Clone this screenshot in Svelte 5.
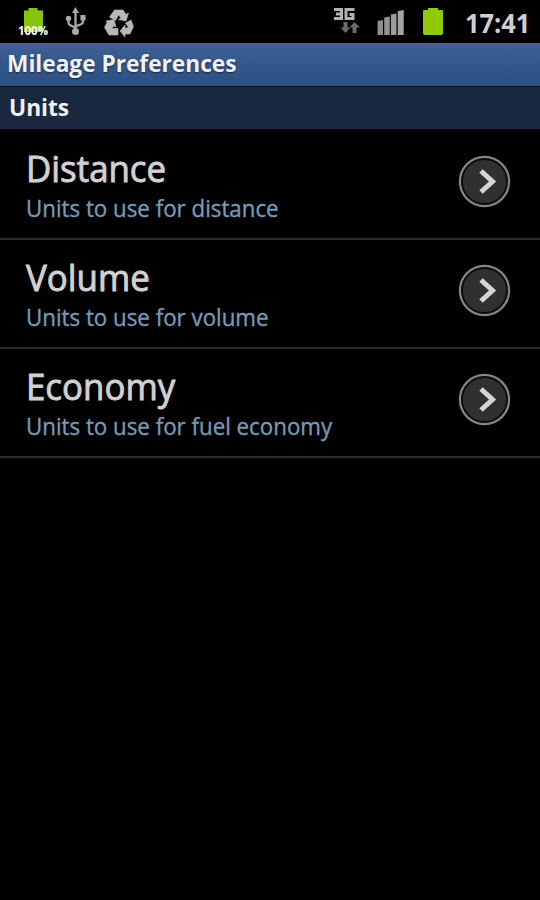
<script>
  let time = '17:41';

  let preferences = [
    { title: 'Distance', summary: 'Units to use for distance' },
    { title: 'Volume', summary: 'Units to use for volume' },
    { title: 'Economy', summary: 'Units to use for fuel economy' }
  ];
</script>

<div class="screen">
  <header class="status-bar">
    <div class="notifications">
      <svg class="battery-level" width="34" height="36" viewBox="0 0 34 36">
        <path d="M7 5.500h4.500V3h9v2.500H26V27H7z" fill="#86c40c" />
        <text x="1" y="30" textLength="30" lengthAdjust="spacingAndGlyphs">100%</text>
      </svg>
      <svg class="usb" width="22" height="30" viewBox="0 0 22 30">
        <g fill="none" stroke="#a8a8a8" stroke-width="2.300">
          <path d="M10.500 5v20M3.500 12v3.500q0 2 2 2.800l5 2.700M18 11v3.500q0 2-2 2.800l-5.500 2" />
        </g>
        <g fill="#a8a8a8">
          <path d="M10.500 0l3.500 6H7z" />
          <circle cx="3.500" cy="11.500" r="2.700" />
          <path d="M15.500 8h5v5.500h-5z" />
          <circle cx="10.500" cy="24.500" r="3.500" />
        </g>
      </svg>
      <svg class="recycle" width="30" height="30" viewBox="0 0 30 30">
        <g fill="#b8b8b8" stroke="#b8b8b8" stroke-width=".6">
          <path d="M10.500 1h8.500l3 4.500 2.500-1.500-2.500 8-7.500-1.500 2.500-1.500-2.500-3-3 5.500L5.500 8z" />
          <path d="M21.500 14l5.500-3 2.500 6.500-3.500 7.500H21v3l-5-6 5-6v3h2.500l.5-1.500z" />
          <path d="M2 12l8-1.500 2 7.500-2.500-1L8 19.500h6v6.500H5L.5 18.500l2.500-5z" />
        </g>
      </svg>
    </div>
    <div class="indicators">
      <svg class="network" width="29" height="28" viewBox="0 0 29 28">
        <g fill="none" stroke="#b2b2b2" stroke-width="3">
          <path d="M1 2.500h7.500v9H1M3 7h5.500M21.500 2.500H13v9h7V7.500h-3.500" />
        </g>
        <g fill="#6c6c6c">
          <path d="M10.500 15h4v5.500h3L12.500 26l-5-5.500h3z" />
          <path d="M19.500 26h4v-5.500h3.500L21.500 15l-5 5.500h3z" />
        </g>
      </svg>
      <svg class="signal" width="28" height="26" viewBox="0 0 28 26">
        <defs>
          <linearGradient id="bars" x1="0" x2="1">
            <stop offset="0" stop-color="#8a8a8a" />
            <stop offset="1" stop-color="#a8a8a8" />
          </linearGradient>
        </defs>
        <path d="M.500 11l5.500-1v15H.500zM7.200 7.500l5.500-1V25H7.200zM13.900 4.500l5.500-1V25h-5.500zM20.700 1l6-1v25h-6z" fill="url(#bars)" />
      </svg>
      <svg class="battery" width="22" height="30" viewBox="0 0 22 30">
        <path d="M2 3h4V1h10v2h4q1 0 1 1v22q0 2-2 2H3q-2 0-2-2V4q0-1 1-1z" fill="#8fca05" />
      </svg>
      <span class="clock">{time}</span>
    </div>
  </header>

  <h1 class="title-bar"><span>Mileage Preferences</span></h1>
  <h2 class="category"><span>Units</span></h2>

  <ul class="preferences">
    {#each preferences as preference}
      <li class="preference">
        <div class="labels">
          <span class="title">{preference.title}</span>
          <span class="summary">{preference.summary}</span>
        </div>
        <svg class="more" width="54" height="54" viewBox="0 0 54 54">
          <circle cx="26.500" cy="26.500" r="24.500" fill="#303030" stroke="#858585" stroke-width="2.400" />
          <circle cx="26.500" cy="26.500" r="22.500" fill="none" stroke="#0c0c0c" stroke-width="1.800" />
          <path d="M23 16l11.500 10.500L23 37" fill="none" stroke="#d4d4d4" stroke-width="5" />
        </svg>
      </li>
    {/each}
  </ul>
</div>

<style>
  :global(body) {
    background: #000;
  }
  .screen {
    height: 900px;
    background: #000;
    font-family: "Open Sans", "Noto Sans", sans-serif;
    overflow: hidden;
  }
  .status-bar {
    height: 43px;
    display: flex;
    justify-content: space-between;
  }
  .notifications,
  .indicators {
    display: flex;
    align-items: flex-start;
  }
  .battery-level {
    margin: 5px 0 0 17px;
    overflow: visible;
  }
  .battery-level text {
    font-size: 12px;
    font-weight: 700;
    fill: #fff;
  }
  .usb {
    margin: 7px 0 0 14px;
  }
  .recycle {
    margin: 9px 0 0 17px;
  }
  .network {
    margin: 7px 0 0;
  }
  .signal {
    margin: 10px 0 0 15px;
  }
  .battery {
    margin: 7px 0 0 17px;
  }
  .clock {
    width: 66px;
    margin: 0 9px 0 21px;
    color: #cfcfcf;
    font-size: 27px;
    font-weight: 700;
    line-height: 45px;
    white-space: nowrap;
    transform: scaleX(.94);
    transform-origin: left;
  }
  .title-bar,
  .category {
    margin: 0;
    box-sizing: border-box;
    color: #f0f2f6;
    font-size: 24px;
    font-weight: 700;
    white-space: nowrap;
  }
  .title-bar span,
  .category span,
  .title,
  .summary {
    display: inline-block;
    transform-origin: left;
  }
  .title-bar {
    height: 43px;
    padding-left: 7px;
    background: linear-gradient(#46639a, #3a5d92 15%, #2c5083);
    line-height: 40px;
    text-shadow: 0 1px 2px #14284a;
  }
  .title-bar span {
    transform: scaleX(.945);
  }
  .category {
    height: 43px;
    padding-left: 9px;
    border-top: 1px solid #0b1424;
    background: #19273f;
    line-height: 40px;
  }
  .category span {
    transform: scaleX(.945);
  }
  .preferences {
    margin: 0;
    padding: 0;
    list-style: none;
  }
  .preference {
    height: 109px;
    padding: 0 28px 0 26px;
    box-sizing: border-box;
    display: flex;
    justify-content: space-between;
    border-bottom: 2px solid #2a2a2a;
  }
  .preference:first-child {
    height: 111px;
    padding-top: 2px;
  }
  .labels {
    display: flex;
    flex-direction: column;
    align-items: flex-start;
    padding-top: 13px;
    white-space: nowrap;
  }
  .title {
    color: #d2d0d1;
    font-size: 36.500px;
    line-height: 48px;
    -webkit-text-stroke: .9px #d2d0d1;
    transform: scaleX(.955);
  }
  .summary {
    color: #7899b3;
    font-size: 24.500px;
    line-height: 32px;
    -webkit-text-stroke: .4px #7899b3;
    transform: scaleX(.91);
  }
  .more {
    margin-top: 24px;
  }
</style>
